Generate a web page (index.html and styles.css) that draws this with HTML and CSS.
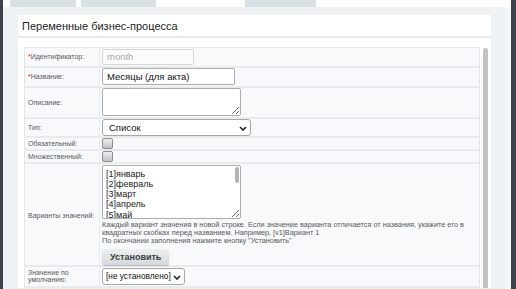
FILE: index.html
```html
<!DOCTYPE html>
<html>
<head>
  <meta charset="UTF-8">
  <link rel="stylesheet" href="styles.css">
</head>
<body>
  <div class="edge-left"></div>
  <div class="main">
    <div class="tabs">
      <div class="tab"></div>
      <div class="tab tab-2"></div>
      <div class="tab tab-active"></div>
      <div class="tab tab-4"></div>
    </div>
    <div class="panel">
      <div class="title">Переменные бизнес-процесса</div>
      <div class="form-wrap">
        <table class="form">
          <tr class="row-1">
            <td class="label"><span class="req">*</span>Идентификатор:</td>
            <td><input class="inp inp-id" type="text" placeholder="month" disabled></td>
          </tr>
          <tr class="row-2">
            <td class="label"><span class="req">*</span>Название:</td>
            <td><input class="inp inp-name" type="text" value="Месяцы (для акта)"></td>
          </tr>
          <tr class="row-3">
            <td class="label">Описание:</td>
            <td><textarea class="ta ta-desc"></textarea></td>
          </tr>
          <tr class="row-4">
            <td class="label">Тип:</td>
            <td>
              <div class="sel sel-type">Список
                <svg class="chev" width="8" height="5" viewBox="0 0 8 5"><path d="M1 1l3 3 3-3" fill="none" stroke="#222" stroke-width="1.6"/></svg>
              </div>
            </td>
          </tr>
          <tr class="row-5">
            <td class="label">Обязательный:</td>
            <td><span class="check"></span></td>
          </tr>
          <tr class="row-6">
            <td class="label">Множественный:</td>
            <td><span class="check"></span></td>
          </tr>
          <tr class="row-7">
            <td class="label label-bottom">Варианты значений:</td>
            <td>
              <div class="list-box">
                <textarea class="ta ta-list">[1]январь
[2]февраль
[3]март
[4]апрель
[5]май
[6]июнь
[7]июль
[8]август
[9]сентябрь
[10]октябрь
[11]ноябрь
[12]декабрь</textarea>
                <div class="list-thumb"></div>
              </div>
              <div class="help">Каждый вариант значения в новой строке. Если значение варианта отличается от названия, укажите его в квадратных скобках перед названием. Например, [v1]Вариант 1<br>По окончании заполнения нажмите кнопку "Установить"</div>
              <div class="btn">Установить</div>
            </td>
          </tr>
          <tr class="row-8">
            <td class="label">Значение по умолчанию:</td>
            <td>
              <div class="sel sel-def">[не установлено]
                <svg class="chev" width="8" height="5" viewBox="0 0 8 5"><path d="M1 1l3 3 3-3" fill="none" stroke="#222" stroke-width="1.6"/></svg>
              </div>
            </td>
          </tr>
        </table>
        <div class="scroll"></div>
      </div>
    </div>
  </div>
  <div class="edge-right"></div>
</body>
</html>
```

FILE: styles.css
```css
html, body {
  margin: 0;
  height: 100%;
  overflow: hidden;
}

body {
  display: flex;
  font-family: "Liberation Sans", Arial, sans-serif;
  background: #f4f6f7;
}

.edge-left {
  width: 3px;
  flex-shrink: 0;
  background: #3c4249;
}

.edge-right {
  width: 5px;
  flex-shrink: 0;
  background: #3c4249;
}

.main {
  flex: 1;
  display: flex;
  flex-direction: column;
  overflow: hidden;
  background: #fbfcfc;
}

.tabs {
  display: flex;
  flex-shrink: 0;
  height: 7px;
  padding-left: 7px;
}

.tab {
  width: 66px;
  background: #d8e0e3;
  margin-right: 5px;
}

.tab-2 {
  width: 75px;
  margin-right: 4px;
}

.tab-active {
  width: 80px;
  background: #ffffff;
}

.tab-4 {
  width: 71px;
}

.panel {
  flex: 1 0 auto;
  background: #eef2f4;
  padding: 8px 14px 0 15px;
  border-right: 6px solid #f5f8f9;
}

.title {
  box-sizing: border-box;
  background: #ffffff;
  height: 23px;
  padding: 3px 0 0 4px;
  font-size: 11px;
  line-height: 16px;
  color: #1e1e1e;
  border-bottom: 2px solid #e6eaec;
}

.form-wrap {
  display: flex;
  background: #ffffff;
  padding: 9px 0 0 6px;
  gap: 3px;
}

.form {
  width: 456px;
  border-collapse: collapse;
  border: 1px solid #e2e6e8;
  background: #f8f9fa;
}

.form td {
  border-bottom: 2px solid #e8ebed;
  padding: 0 0 0 2px;
  vertical-align: middle;
}

.form td.label {
  width: 71px;
  padding-left: 3px;
  font-size: 7px;
  color: #55595c;
  border-right: 1px solid #e8ebed;
}

.label-bottom {
  vertical-align: bottom !important;
  padding-bottom: 46px !important;
}

.req {
  color: #d0262b;
}

.row-1 { height: 19px; }
.row-2 { height: 20px; }
.row-3 { height: 31px; }
.row-4 { height: 19px; }
.row-5 { height: 11px; }
.row-6 { height: 12px; }
.row-7 { height: 101px; }
.row-8 { height: 21px; }

.inp {
  display: block;
  box-sizing: border-box;
  height: 17px;
  border: 1px solid #a9adb0;
  border-radius: 2px;
  padding: 0 4px;
  font-family: "Liberation Sans", Arial, sans-serif;
  font-size: 9.5px;
  color: #111;
  background: #fff;
}

.inp-id {
  width: 92px;
  height: 16px;
  border-color: #d4d7d9;
  background: #fafbfb;
}

.inp-id::placeholder {
  color: #a6a9ab;
}

.inp-name {
  width: 133px;
}

.ta {
  display: block;
  box-sizing: border-box;
  border: 1px solid #a9adb0;
  border-radius: 2px;
  background: #fff;
  resize: both;
}

.ta-desc {
  width: 139px;
  height: 28px;
}

.sel {
  position: relative;
  box-sizing: border-box;
  height: 17px;
  border: 1px solid #a4a8ab;
  border-radius: 3px;
  background: #fff;
  padding-left: 6px;
  font-size: 9.5px;
  line-height: 15px;
  color: #111;
  white-space: nowrap;
}

.sel-type {
  width: 149px;
}

.sel-def {
  width: 83px;
  padding-left: 3px;
  font-size: 8.3px;
}

.chev {
  position: absolute;
  right: 3px;
  top: 6px;
}

.check {
  display: block;
  width: 9px;
  height: 9px;
  border: 1px solid #8a8e91;
  border-radius: 2px;
  background: linear-gradient(#eceeef, #bfc3c6);
}

.list-box {
  position: relative;
  width: 139px;
  margin-top: 1px;
}

.ta-list {
  width: 139px;
  height: 54px;
  padding: 3px 8px 0 3px;
  overflow: hidden;
  font-family: "Liberation Sans", Arial, sans-serif;
  font-size: 9px;
  line-height: 10.3px;
  color: #222;
}

.list-thumb {
  position: absolute;
  top: 2px;
  right: 2px;
  width: 4px;
  height: 16px;
  border-radius: 2px;
  background: #b1b4b6;
}

.help {
  margin-top: 2px;
  font-size: 7.3px;
  line-height: 8.4px;
  color: #555a5d;
  padding-right: 14px;
}

.btn {
  display: inline-block;
  margin: 1px 0 0;
  height: 16px;
  padding: 0 8px;
  border-radius: 3px;
  background: linear-gradient(#eef1f2, #d4d9dc);
  box-shadow: 0 1px 1px #b4b9bc;
  font-size: 9px;
  font-weight: bold;
  line-height: 16px;
  color: #3b4145;
}

.scroll {
  width: 5px;
  margin-top: 1px;
  background: #c3c3c3;
  border-radius: 2px 2px 0 0;
}
```
